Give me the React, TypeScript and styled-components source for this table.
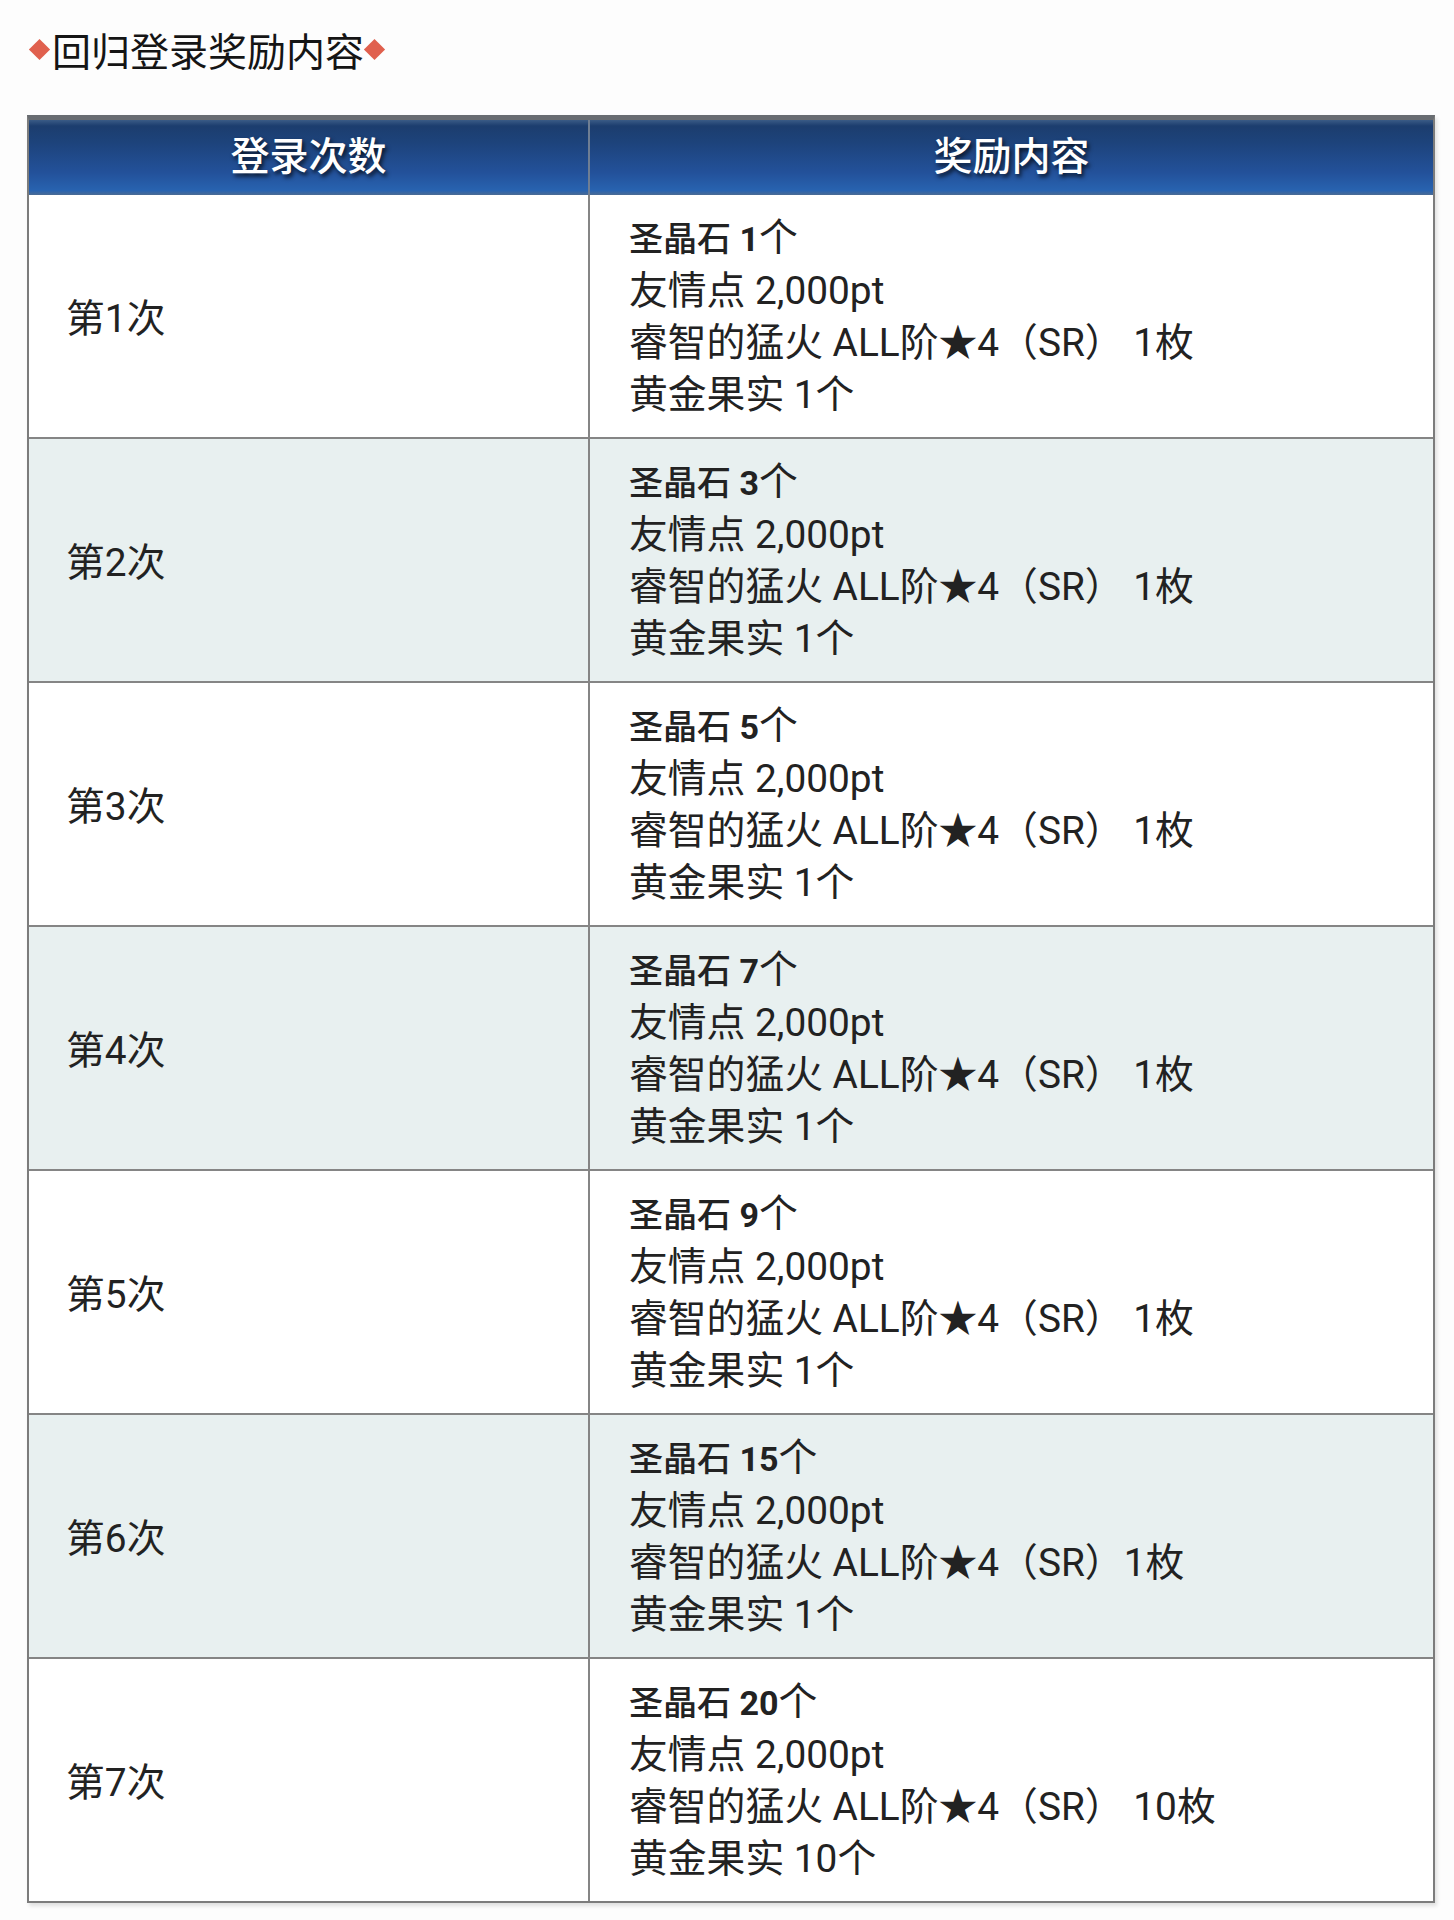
import React from "react";
import styled, { createGlobalStyle } from "styled-components";

const GlobalStyle = createGlobalStyle`
  html, body {
    margin: 0;
    padding: 0;
    background: #fdfdfd;
  }
  body {
    font-family: Roboto, "Noto Sans CJK SC", "Noto Sans", sans-serif;
    color: #222;
  }
`;

const Page = styled.div`
  width: 1454px;
  min-height: 1920px;
  box-sizing: border-box;
  padding-top: 24px;
  background: #fdfdfd;
`;

const Title = styled.h2`
  margin: 0 0 40px 29px;
  display: flex;
  align-items: center;
  font-size: 39px;
  line-height: 51px;
  font-weight: 400;
  color: #151515;
  font-family: "Noto Sans CJK SC", sans-serif;
`;

const Diamond = styled.span`
  display: inline-block;
  width: 15px;
  height: 15px;
  background: #e0604e;
  transform: rotate(45deg);
  margin: 0 5px 0 3px;
  flex: none;
`;

const Table = styled.div`
  margin: 0 19px 0 27px;
  border: 2px solid #7c7c7c;
  border-top: 5px solid #686c71;
  box-shadow: 2px 3px 4px rgba(0, 0, 0, 0.12);
`;

const HeaderRow = styled.div`
  display: grid;
  grid-template-columns: 561px 1fr;
  height: 75px;
  background: linear-gradient(
    to bottom,
    #3a5b86 0px,
    #1c3d6e 6px,
    #1d437b 30%,
    #23519a 70%,
    #2863b0 94%,
    #4a6a94 100%
  );
`;

const HeadCell = styled.div<{ $divider?: boolean }>`
  display: flex;
  align-items: center;
  justify-content: center;
  padding-bottom: 9px;
  box-sizing: border-box;
  color: #ffffff;
  font-family: "Noto Sans CJK SC", sans-serif;
  font-size: 39px;
  font-weight: 500;
  text-shadow: 2px 3px 4px rgba(0, 0, 0, 0.75);
  border-right: ${(p) => (p.$divider ? "2px solid #6f7e93" : "none")};
`;

const Row = styled.div<{ $alt?: boolean; $last?: boolean }>`
  display: grid;
  grid-template-columns: 561px 1fr;
  height: ${(p) => (p.$last ? "242px" : "244px")};
  box-sizing: border-box;
  background: ${(p) => (p.$alt ? "#e8f0f0" : "#ffffff")};
  border-bottom: ${(p) => (p.$last ? "none" : "2px solid #858585")};
`;

const CountCell = styled.div`
  display: flex;
  align-items: center;
  padding-left: 37px;
  padding-bottom: 3px;
  border-right: 2px solid #858585;
  font-size: 38.8px;
  color: #222;
`;

const RewardCell = styled.div`
  display: flex;
  flex-direction: column;
  justify-content: center;
  padding-left: 39px;
  font-size: 38.8px;
  line-height: 52px;
  color: #222;
`;

const Line = styled.div`
  white-space: pre;
`;

const GemName = styled.span`
  font-size: 34px;
  font-weight: 500;
`;

const GemCount = styled.span`
  font-size: 34px;
  font-weight: 700;
`;

type RowData = {
  n: number;
  gems: string;
  fire: string;
  fruit: string;
};

const rows: RowData[] = [
  { n: 1, gems: "1", fire: "（SR） 1枚", fruit: "1个" },
  { n: 2, gems: "3", fire: "（SR） 1枚", fruit: "1个" },
  { n: 3, gems: "5", fire: "（SR） 1枚", fruit: "1个" },
  { n: 4, gems: "7", fire: "（SR） 1枚", fruit: "1个" },
  { n: 5, gems: "9", fire: "（SR） 1枚", fruit: "1个" },
  { n: 6, gems: "15", fire: "（SR）1枚", fruit: "1个" },
  { n: 7, gems: "20", fire: "（SR） 10枚", fruit: "10个" },
];

export default function App() {
  return (
    <>
      <GlobalStyle />
      <Page>
        <Title>
          <Diamond />
          回归登录奖励内容
          <Diamond />
        </Title>
        <Table>
          <HeaderRow>
            <HeadCell $divider>登录次数</HeadCell>
            <HeadCell>奖励内容</HeadCell>
          </HeaderRow>
          {rows.map((r, i) => (
            <Row key={r.n} $alt={i % 2 === 1} $last={i === rows.length - 1}>
              <CountCell>第{r.n}次</CountCell>
              <RewardCell>
                <Line>
                  <GemName>圣晶石 </GemName>
                  <GemCount>{r.gems}</GemCount>个
                </Line>
                <Line>友情点 2,000pt</Line>
                <Line>睿智的猛火 ALL阶★4{r.fire}</Line>
                <Line>黄金果实 {r.fruit}</Line>
              </RewardCell>
            </Row>
          ))}
        </Table>
      </Page>
    </>
  );
}
